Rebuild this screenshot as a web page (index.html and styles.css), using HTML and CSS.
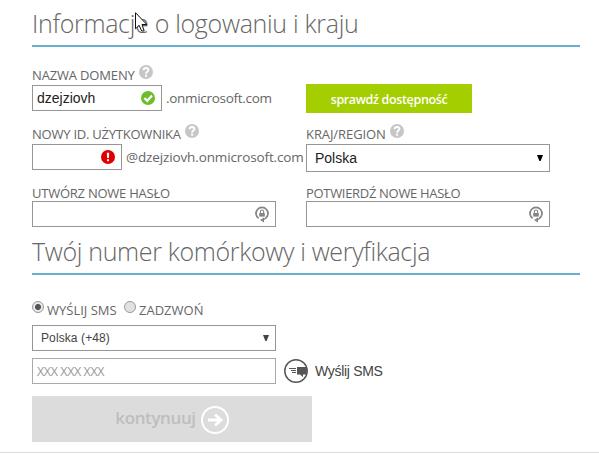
FILE: index.html
```
<!DOCTYPE html>
<html lang="pl">
<head>
<meta charset="utf-8">
<title>Informacje o logowaniu i kraju</title>
<link rel="stylesheet" href="styles.css">
</head>
<body>
<svg class="defs" width="0" height="0">
  <symbol id="help" viewBox="0 0 14 14"><circle cx="7" cy="7" r="7" fill="#c6c6c6"/><path d="M4.6 5.2C4.7 2.2 9.7 2.5 9.4 5.2C9.2 6.6 7.1 6.7 7.1 8.7" fill="none" stroke="#fff" stroke-width="2"/><rect x="6.1" y="9.7" width="2" height="2" fill="#fff"/></symbol>
  <symbol id="lock" viewBox="0 0 16 18"><path d="M4.6 13.4A6 6 0 1 1 11.4 13.4" fill="none" stroke="#858585" stroke-width="1.7"/><path d="M10 12.6L6 15L10 17.4Z" fill="#858585"/><path d="M9 15L12 13" stroke="#858585" stroke-width="1.5"/><rect x="5.2" y="8" width="5.6" height="3.6" fill="#858585"/><path d="M6.4 8V6.6A1.6 1.6 0 0 1 9.6 6.6V8" fill="none" stroke="#858585" stroke-width="1.1"/></symbol>
</svg>
<main class="form">
  <h1 class="title title-login"><span>Informacje o logowaniu i kraju</span></h1>
  <section class="grid">
    <div class="cell cell-domain">
      <div class="label"><span class="l-domain">NAZWA DOMENY</span><svg class="help"><use href="#help"/></svg></div>
      <div class="line">
        <div class="input domain"><span>dzejziovh</span><svg class="status" viewBox="0 0 14 14"><circle cx="7" cy="7" r="7" fill="#6fbd2c"/><path d="M3.4 7L6.2 9.8L11 4.4" fill="none" stroke="#fff" stroke-width="2.2"/></svg></div>
        <span class="suffix s-domain">.onmicrosoft.com</span>
      </div>
    </div>
    <div class="cell cell-check"><button class="check"><span>sprawdź dostępność</span></button></div>
    <div class="cell">
      <div class="label"><span class="l-user">NOWY ID. UŻYTKOWNIKA</span><svg class="help"><use href="#help"/></svg></div>
      <div class="line">
        <div class="input user"><svg class="status" viewBox="0 0 14 14"><circle cx="7" cy="7" r="7" fill="#e00000"/><path d="M5.8 2.7H8.2L7.9 8H6.1Z" fill="#fff"/><rect x="6" y="9.2" width="2" height="2" fill="#fff"/></svg></div>
        <span class="suffix s-user">@dzejziovh.onmicrosoft.com</span>
      </div>
    </div>
    <div class="cell">
      <div class="label"><span class="l-region">KRAJ/REGION</span><svg class="help"><use href="#help"/></svg></div>
      <div class="input country"><span>Polska</span><svg class="arrow" viewBox="0 0 6 6"><path d="M0 0H6L3.6 6H2.4Z"/></svg></div>
    </div>
    <div class="cell">
      <div class="label label-low"><span class="l-pass">UTWÓRZ NOWE HASŁO</span></div>
      <div class="input password"><svg class="lock"><use href="#lock"/></svg></div>
    </div>
    <div class="cell">
      <div class="label label-low"><span class="l-confirm">POTWIERDŹ NOWE HASŁO</span></div>
      <div class="input password"><svg class="lock"><use href="#lock"/></svg></div>
    </div>
  </section>
  <h2 class="title title-phone"><span>Twój numer komórkowy i weryfikacja</span></h2>
  <div class="radios">
    <i class="radio on"></i><span class="r-sms">WYŚLIJ SMS</span>
    <i class="radio"></i><span class="r-call">ZADZWOŃ</span>
  </div>
  <div class="input prefix"><span>Polska (+48)</span><svg class="arrow" viewBox="0 0 6 6"><path d="M0 0H6L3.6 6H2.4Z" fill="#444"/></svg></div>
  <div class="phone-row">
    <div class="input phone"><span>XXX XXX XXX</span></div>
    <svg class="sms" viewBox="0 0 24 24"><circle cx="12" cy="12" r="11.2" fill="none" stroke="#555" stroke-width="1.5"/><path d="M5 9.5H12M7 11.5H12M8 13.5H12" stroke="#555" stroke-width="1"/><path d="M13 8H22.5L23 12L22 15.5H19V18L16 15.5H13Z" fill="#555"/></svg>
    <span class="send">Wyślij SMS</span>
  </div>
  <button class="continue"><span>kontynuuj</span><svg viewBox="0 0 28 28"><circle cx="14" cy="14" r="13" fill="none" stroke="#fff" stroke-width="2"/><path d="M7 14H20M14 8.5L20 14L14 19.5" fill="none" stroke="#fff" stroke-width="2.8"/></svg></button>
</main>
<footer class="rule"></footer>
<svg class="cursor" viewBox="0 0 13 20"><path d="M.5 .7V16.8L4.1 13.3L6.7 19H9.2L7 12.5H11.8Z" fill="#fff" stroke="#111" stroke-width="1"/></svg>
</body>
</html>
```
FILE: styles.css
```
* { box-sizing: border-box; }
body { margin: 0; height: 463px; overflow: hidden; background: #fff; color: #666; font: 13px/18px "Open Sans", sans-serif; }
svg { display: block; flex: none; }
span { white-space: nowrap; }
.defs { position: absolute; }
.form { width: 548px; margin-left: 32px; }
.title { margin: 0; height: 47px; padding-top: 5px; border-bottom: 2px solid #67b0d5; font-size: 25px; line-height: 36px; font-weight: 300; letter-spacing: -.31px; }
.title-phone { padding-top: 6px; height: 48px; letter-spacing: -.35px; }
.grid { display: grid; grid-template-columns: 274px 274px; grid-template-rows: 77px 57px 46px; }
.cell { display: flex; flex-direction: column; align-items: flex-start; }
.cell-domain { padding-top: 18px; }
.cell-check { padding-top: 37px; }
.label { display: flex; gap: 4px; height: 20px; }
.label span { padding-top: 1px; }
.label-low span { padding-top: 3px; }
.l-domain { letter-spacing: -.16px; }
.l-user { letter-spacing: -.23px; }
.l-region { letter-spacing: -.08px; }
.l-pass { letter-spacing: -.24px; }
.l-confirm { letter-spacing: -.31px; }
.help { width: 14px; height: 14px; }
.line { display: flex; }
.input { display: flex; align-items: center; justify-content: space-between; height: 26px; border: 1px solid #969696; background: #fff; color: #222; font-family: "Liberation Sans", sans-serif; font-size: 14px; }
.domain { width: 130px; padding: 0 6px 0 4px; }
.user { width: 90px; padding-right: 6px; justify-content: flex-end; }
.status { width: 14px; height: 14px; }
.suffix { line-height: 26px; font-size: 13.5px; margin-left: 4px; letter-spacing: -.3px; }
.s-user { letter-spacing: -.13px; }
.check { width: 166px; height: 29px; border: 0; padding: 2px 0 0; background: #a4ce00; color: #fff; font: 600 12.5px/27px "Open Sans", sans-serif; letter-spacing: -.35px; }
.country { width: 244px; height: 28px; padding: 0 6px 0 8px; }
.arrow { width: 6px; height: 6px; }
.password { width: 244px; padding-right: 5px; justify-content: flex-end; }
.lock { width: 16px; height: 18px; }
.radios { display: flex; height: 50px; padding-top: 26px; }
.radio { width: 12px; height: 12px; border: 1px solid #999; border-radius: 50%; background: #e2e2e2; margin-right: 3px; }
.r-sms { width: 77px; }
.on { background: radial-gradient(circle, #555 0 2.6px, #e8e8e8 3.4px); }
.prefix { width: 244px; padding: 0 6px 0 8px; color: #444; font-size: 12px; letter-spacing: .1px; }
.phone-row { display: flex; align-items: center; margin-top: 7px; }
.phone { width: 244px; padding-left: 4px; color: #999; border-color: #aaa; font: 12.5px/18px "Open Sans", sans-serif; letter-spacing: -.4px; }
.phone span { padding-top: 1px; }
.sms { width: 24px; height: 24px; margin-left: 8px; }
.send { margin-left: 7px; color: #444; font: 14px/18px "Liberation Sans", sans-serif; letter-spacing: -.3px; }
.continue { display: flex; align-items: center; justify-content: center; width: 280px; height: 46px; margin-top: 12px; padding: 0; border: 0; background: #dcdcdc; color: #bebebe; font: 600 17px/24px "Open Sans", sans-serif; letter-spacing: -.4px; gap: 5px; }
.continue svg { width: 28px; height: 28px; margin-top: 2px; }
.continue span { margin-bottom: 2px; }
.rule { height: 1px; margin-top: 10px; background: #dcdcdc; }
.cursor { position: absolute; left: 135px; top: 12px; width: 13px; height: 20px; }
```
